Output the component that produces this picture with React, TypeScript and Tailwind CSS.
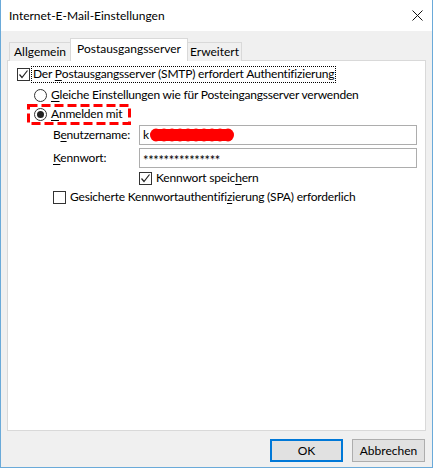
import React from "react";

const font = "font-['Lato','Liberation_Sans',sans-serif]";

function CheckBox({ checked }: { checked?: boolean }) {
  return (
    <span className="w-[13px] h-[13px] border border-[#333] bg-white flex items-center justify-center shrink-0">
      {checked && (
        <svg width="11" height="11" viewBox="0 0 11 11">
          <polyline points="1.5,5.5 4,8.5 9.5,1.5" fill="none" stroke="#222" strokeWidth="1.2" />
        </svg>
      )}
    </span>
  );
}

function Radio({ checked }: { checked?: boolean }) {
  return (
    <span className="w-[13px] h-[13px] rounded-full border border-[#333] bg-white flex items-center justify-center shrink-0">
      {checked && <span className="w-[7px] h-[7px] rounded-full bg-[#222]" />}
    </span>
  );
}

// red censor scribble over the user name
function Scribble() {
  const dots = [4, 12, 20, 28, 36, 44, 52, 60, 68, 76];
  return (
    <svg width="84" height="16" viewBox="0 0 84 16" className="ml-[1px]">
      {dots.map((x, i) => (
        <ellipse key={i} cx={x + 2} cy={8} rx={6} ry={6.5} fill="#ff0000" />
      ))}
      <rect x="4" y="2" width="76" height="12" fill="#ff0000" />
    </svg>
  );
}

export default function App() {
  return (
    <div className={`${font} w-[433px] h-[468px] flex flex-col border-x border-b border-[#6aaad9] text-[12px] text-black leading-none`}>
      {/* title bar */}
      <div className="h-[31px] bg-white flex items-center justify-between pl-[8px] pr-[9px] shrink-0">
        <span className="text-[12px]">Internet-E-Mail-Einstellungen</span>
        <svg width="11" height="11" viewBox="0 0 11 11">
          <path d="M0.5 0.5 L10.5 10.5 M10.5 0.5 L0.5 10.5" stroke="#111" strokeWidth="1" />
        </svg>
      </div>

      <div className="flex-1 bg-[#f0f0f0] flex flex-col px-[6px]">
        {/* tabs */}
        <div className="flex items-end pt-[7px] pl-[2px] h-[29px] relative z-10">
          <div className="w-[62px] h-[19px] border border-b-0 border-[#d9d9d9] bg-[#f0f0f0] flex items-center justify-center -mb-px">
            Allgemein
          </div>
          <div className="w-[118px] h-[23px] border border-b-0 border-[#d9d9d9] bg-white flex items-center justify-center -mx-px -mb-px pb-[3px]">
            Postausgangsserver
          </div>
          <div className="w-[55px] h-[19px] border border-b-0 border-[#d9d9d9] bg-[#f0f0f0] flex items-center justify-center -mb-px">
            Erweitert
          </div>
        </div>

        {/* panel */}
        <div className="h-[371px] border border-[#d9d9d9] bg-white flex flex-col pl-[9px] pt-[4px] relative tracking-[-0.2px]">
          <div className="h-[18px] flex items-center">
            <CheckBox checked />
            <span className="ml-[1px] h-[17px] px-[1px] border border-dotted border-black flex items-center">
              Der&nbsp;<span className="underline underline-offset-2">P</span>ostausgangsserver (SMTP) erfordert Authentifizierung
            </span>
          </div>
          <div className="h-[18px] mt-[3px] flex items-center pl-[17px]">
            <Radio />
            <span className="ml-[4px]">
              <span className="underline underline-offset-2">G</span>leiche Einstellungen wie für Posteingangsserver verwenden
            </span>
          </div>
          <div className="h-[20px] flex items-center pl-[17px] relative">
            <Radio checked />
            <span className="ml-[4px]">
              <span className="underline underline-offset-2">A</span>nmelden mit
            </span>
            <svg className="absolute left-[10px] top-0" width="104" height="21" viewBox="0 0 104 21">
              <rect x="1.5" y="1.5" width="101" height="18" fill="none" stroke="#ff0000" strokeWidth="3" strokeDasharray="9 4" />
            </svg>
          </div>
          <div className="h-[20px] mt-[1px] flex items-center pl-[36px]">
            <span className="w-[86px]">
              B<span className="underline underline-offset-2">e</span>nutzername:
            </span>
            <div className="w-[278px] h-[20px] border border-[#adadad] bg-white flex items-center pl-[3px]">
              <span>k</span>
              <Scribble />
            </div>
          </div>
          <div className="h-[20px] mt-[3px] flex items-center pl-[36px]">
            <span className="w-[86px]">
              <span className="underline underline-offset-2">K</span>ennwort:
            </span>
            <div className="w-[278px] h-[20px] border border-[#adadad] bg-white flex items-center pl-[3px] pt-[4px] text-[13px] tracking-[-0.4px]">
              ***************
            </div>
          </div>
          <div className="h-[16px] mt-[2px] flex items-center pl-[122px]">
            <CheckBox checked />
            <span className="ml-[4px]">
              Kennwort speic<span className="underline underline-offset-2">h</span>ern
            </span>
          </div>
          <div className="h-[16px] mt-[3px] flex items-center pl-[36px]">
            <CheckBox />
            <span className="ml-[4px]">
              Gesicherte Kennwortauthentifi<span className="underline underline-offset-2">z</span>ierung (SPA) erforderlich
            </span>
          </div>
        </div>

        {/* buttons */}
        <div className="flex justify-end gap-[9px] mt-[8px] pr-[1px]">
          <button className="w-[73px] h-[23px] border-2 border-[#0078d7] bg-[#e1e1e1] flex items-center justify-center">
            OK
          </button>
          <button className="w-[73px] h-[23px] border border-[#adadad] bg-[#e1e1e1] flex items-center justify-center">
            Abbrechen
          </button>
        </div>
      </div>
    </div>
  );
}
